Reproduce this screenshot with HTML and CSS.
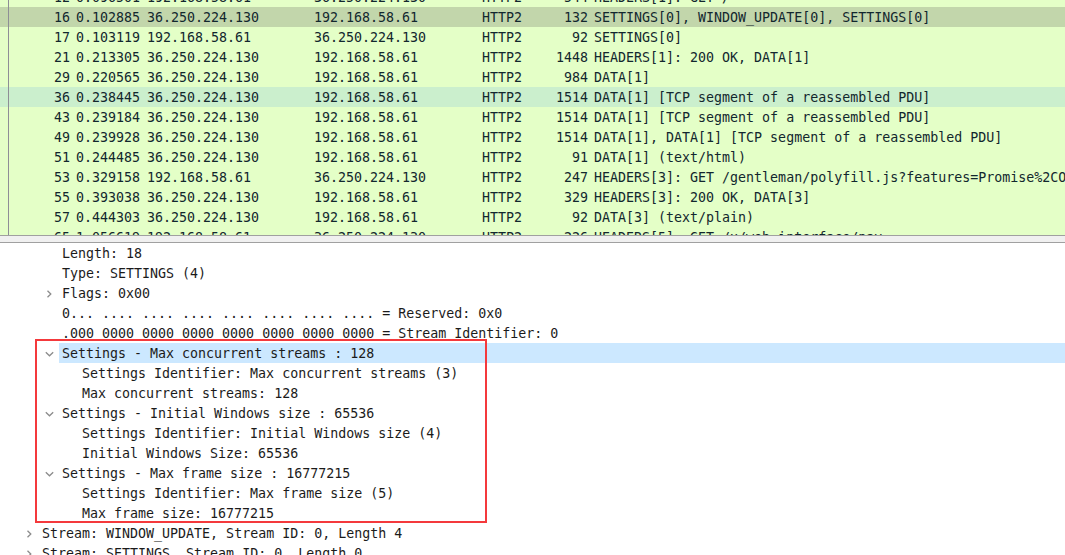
FILE: index.html
```html
<!DOCTYPE html>
<html>
<head>
<meta charset="utf-8">
<link rel="stylesheet" href="styles.css">
</head>
<body>
<div class="app">
  <div class="list">
    <div class="rows">
      <div class="row"><span class="g"></span><span class="c no">12</span><span class="c time">0.096501</span><span class="c src">192.168.58.61</span><span class="c dst">36.250.224.130</span><span class="c proto">HTTP2</span><span class="c len">544</span><span class="c info">HEADERS[1]: GET /</span></div>
      <div class="row sel"><span class="g"></span><span class="c no">16</span><span class="c time">0.102885</span><span class="c src">36.250.224.130</span><span class="c dst">192.168.58.61</span><span class="c proto">HTTP2</span><span class="c len">132</span><span class="c info">SETTINGS[0], WINDOW_UPDATE[0], SETTINGS[0]</span></div>
      <div class="row"><span class="g"></span><span class="c no">17</span><span class="c time">0.103119</span><span class="c src">192.168.58.61</span><span class="c dst">36.250.224.130</span><span class="c proto">HTTP2</span><span class="c len">92</span><span class="c info">SETTINGS[0]</span></div>
      <div class="row"><span class="g"></span><span class="c no">21</span><span class="c time">0.213305</span><span class="c src">36.250.224.130</span><span class="c dst">192.168.58.61</span><span class="c proto">HTTP2</span><span class="c len">1448</span><span class="c info">HEADERS[1]: 200 OK, DATA[1]</span></div>
      <div class="row"><span class="g"></span><span class="c no">29</span><span class="c time">0.220565</span><span class="c src">36.250.224.130</span><span class="c dst">192.168.58.61</span><span class="c proto">HTTP2</span><span class="c len">984</span><span class="c info">DATA[1]</span></div>
      <div class="row hov"><span class="g"></span><span class="c no">36</span><span class="c time">0.238445</span><span class="c src">36.250.224.130</span><span class="c dst">192.168.58.61</span><span class="c proto">HTTP2</span><span class="c len">1514</span><span class="c info">DATA[1] [TCP segment of a reassembled PDU]</span></div>
      <div class="row"><span class="g"></span><span class="c no">43</span><span class="c time">0.239184</span><span class="c src">36.250.224.130</span><span class="c dst">192.168.58.61</span><span class="c proto">HTTP2</span><span class="c len">1514</span><span class="c info">DATA[1] [TCP segment of a reassembled PDU]</span></div>
      <div class="row"><span class="g"></span><span class="c no">49</span><span class="c time">0.239928</span><span class="c src">36.250.224.130</span><span class="c dst">192.168.58.61</span><span class="c proto">HTTP2</span><span class="c len">1514</span><span class="c info">DATA[1], DATA[1] [TCP segment of a reassembled PDU]</span></div>
      <div class="row"><span class="g"></span><span class="c no">51</span><span class="c time">0.244485</span><span class="c src">36.250.224.130</span><span class="c dst">192.168.58.61</span><span class="c proto">HTTP2</span><span class="c len">91</span><span class="c info">DATA[1] (text/html)</span></div>
      <div class="row"><span class="g"></span><span class="c no">53</span><span class="c time">0.329158</span><span class="c src">192.168.58.61</span><span class="c dst">36.250.224.130</span><span class="c proto">HTTP2</span><span class="c len">247</span><span class="c info">HEADERS[3]: GET /gentleman/polyfill.js?features=Promise%2CObject.assign%2CArray.prototype.includes</span></div>
      <div class="row"><span class="g"></span><span class="c no">55</span><span class="c time">0.393038</span><span class="c src">36.250.224.130</span><span class="c dst">192.168.58.61</span><span class="c proto">HTTP2</span><span class="c len">329</span><span class="c info">HEADERS[3]: 200 OK, DATA[3]</span></div>
      <div class="row"><span class="g"></span><span class="c no">57</span><span class="c time">0.444303</span><span class="c src">36.250.224.130</span><span class="c dst">192.168.58.61</span><span class="c proto">HTTP2</span><span class="c len">92</span><span class="c info">DATA[3] (text/plain)</span></div>
      <div class="row"><span class="g"></span><span class="c no">65</span><span class="c time">1.056619</span><span class="c src">192.168.58.61</span><span class="c dst">36.250.224.130</span><span class="c proto">HTTP2</span><span class="c len">226</span><span class="c info">HEADERS[5]: GET /x/web-interface/nav</span></div>
    </div>
  </div>
  <div class="splitter"></div>
  <div class="detail">
    <div class="drow l1"><span class="arrow"></span><span class="label">Length: 18</span></div>
    <div class="drow l1"><span class="arrow"></span><span class="label">Type: SETTINGS (4)</span></div>
    <div class="drow l1"><span class="arrow"><svg width="8" height="8" viewBox="0 0 8 8"><path d="M2.5 0.8 L5.8 4 L2.5 7.2" fill="none" stroke="#8c8c8c" stroke-width="1.3"/></svg></span><span class="label">Flags: 0x00</span></div>
    <div class="drow l1"><span class="arrow"></span><span class="label">0... .... .... .... .... .... .... .... = Reserved: 0x0</span></div>
    <div class="drow l1"><span class="arrow"></span><span class="label">.000 0000 0000 0000 0000 0000 0000 0000 = Stream Identifier: 0</span></div>
    <div class="drow l1 hl"><span class="arrow"><svg width="9" height="8" viewBox="0 0 9 8"><path d="M0.8 2.3 L4.5 5.8 L8.2 2.3" fill="none" stroke="#8c8c8c" stroke-width="1.3"/></svg></span><span class="label">Settings - Max concurrent streams : 128</span></div>
    <div class="drow l2"><span class="label">Settings Identifier: Max concurrent streams (3)</span></div>
    <div class="drow l2"><span class="label">Max concurrent streams: 128</span></div>
    <div class="drow l1"><span class="arrow"><svg width="9" height="8" viewBox="0 0 9 8"><path d="M0.8 2.3 L4.5 5.8 L8.2 2.3" fill="none" stroke="#8c8c8c" stroke-width="1.3"/></svg></span><span class="label">Settings - Initial Windows size : 65536</span></div>
    <div class="drow l2"><span class="label">Settings Identifier: Initial Windows size (4)</span></div>
    <div class="drow l2"><span class="label">Initial Windows Size: 65536</span></div>
    <div class="drow l1"><span class="arrow"><svg width="9" height="8" viewBox="0 0 9 8"><path d="M0.8 2.3 L4.5 5.8 L8.2 2.3" fill="none" stroke="#8c8c8c" stroke-width="1.3"/></svg></span><span class="label">Settings - Max frame size : 16777215</span></div>
    <div class="drow l2"><span class="label">Settings Identifier: Max frame size (5)</span></div>
    <div class="drow l2"><span class="label">Max frame size: 16777215</span></div>
    <div class="drow l0"><span class="arrow"><svg width="8" height="8" viewBox="0 0 8 8"><path d="M2.5 0.8 L5.8 4 L2.5 7.2" fill="none" stroke="#8c8c8c" stroke-width="1.3"/></svg></span><span class="label">Stream: WINDOW_UPDATE, Stream ID: 0, Length 4</span></div>
    <div class="drow l0"><span class="arrow"><svg width="8" height="8" viewBox="0 0 8 8"><path d="M2.5 0.8 L5.8 4 L2.5 7.2" fill="none" stroke="#8c8c8c" stroke-width="1.3"/></svg></span><span class="label">Stream: SETTINGS, Stream ID: 0, Length 0</span></div>
    <div class="annot"></div>
  </div>
</div>
</body>
</html>
```
FILE: styles.css
```css
* { box-sizing: border-box; }
html, body { margin: 0; padding: 0; background: #ffffff; }
body {
  width: 1065px;
  height: 555px;
  overflow: hidden;
  font-family: "DejaVu Sans Mono", "Liberation Mono", monospace;
  font-size: 13.3px;
}
.app { display: flex; flex-direction: column; height: 555px; }
.list {
  height: 235px;
  overflow: hidden;
  background: #e4ffc7;
  flex: none;
}
.rows { margin-top: -13px; }
.row {
  display: grid;
  grid-template-columns: 9px 64px 71px 167px 168px 61px 51px 1fr;
  height: 20px;
  line-height: 19px;
  padding-top: 1px;
  color: #12272e;
  background: #e4ffc7;
  white-space: nowrap;
}
.row.sel { background: #c2d6ab; }
.row.hov { background: #cbefcd; }
.g { border-right: 1px solid #8e8e96; height: 20px; margin-top: -1px; }
.c { overflow: hidden; }
.no { text-align: right; padding-right: 3px; }
.time, .src, .dst, .proto { padding-left: 3px; }
.len { text-align: right; padding-right: 3px; }
.info { padding-left: 3px; overflow: hidden; }
.splitter {
  height: 8px;
  flex: none;
  background: #f0f0f0;
  border-top: 1px solid #a0a0a0;
  border-bottom: 1px solid #a0a0a0;
}
.detail {
  position: relative;
  flex: 1;
  background: #ffffff;
  overflow: hidden;
}
.drow {
  display: flex;
  height: 20px;
  line-height: 20px;
  color: #1b1b1b;
  white-space: nowrap;
}
.drow.l0 { padding-left: 21px; }
.drow.l1 { padding-left: 41px; }
.drow.l2 { padding-left: 79px; }
.arrow {
  width: 16px;
  flex: none;
  display: flex;
  align-items: center;
  justify-content: center;
  margin-right: 2px;
  padding-top: 1px;
}
.arrow svg { display: block; }
.label { flex: 1; padding-left: 3px; padding-top: 1px; line-height: 19px; }
.drow.hl .label { background: #cce8ff; }
.annot {
  position: absolute;
  left: 35px;
  top: 96px;
  width: 452px;
  height: 184px;
  border: 2px solid #f4393c;
  pointer-events: none;
}
```
